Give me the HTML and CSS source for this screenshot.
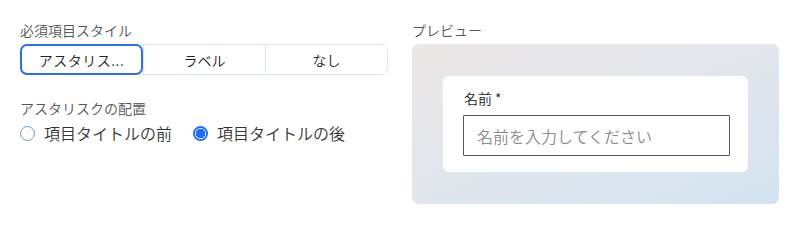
FILE: index.html
```html
<!DOCTYPE html>
<html lang="ja">
<head>
<meta charset="utf-8">
<link rel="stylesheet" href="styles.css">
</head>
<body>
<div class="page">
  <div class="col">
    <div class="label">必須項目スタイル</div>
    <div class="seg">
      <div class="seg-item active">アスタリス...</div>
      <div class="seg-item">ラベル</div>
      <div class="seg-item">なし</div>
    </div>
    <div class="label label2">アスタリスクの配置</div>
    <div class="radios">
      <label class="radio"><span class="circle"></span><span>項目タイトルの前</span></label>
      <label class="radio"><span class="circle checked"></span><span>項目タイトルの後</span></label>
    </div>
  </div>
  <div class="col">
    <div class="label">プレビュー</div>
    <div class="preview">
      <div class="card">
        <div class="field-label">名前 *</div>
        <div class="input">名前を入力してください</div>
      </div>
    </div>
  </div>
</div>
</body>
</html>
```
FILE: styles.css
```css
* { box-sizing: border-box; }
html, body { margin: 0; background: #ffffff; }
body {
  font-family: "Noto Sans CJK JP", "Noto Sans", sans-serif;
  font-weight: 350;
  color: #333;
}
.page {
  display: grid;
  grid-template-columns: 368px 367px;
  column-gap: 24px;
  padding: 20px 21px 0 20px;
}
.col { display: flex; flex-direction: column; }
.label {
  font-size: 14px;
  line-height: 20px;
  color: #555;
  margin-bottom: 4px;
}
.label2 { margin-top: 23px; margin-bottom: 2px; }
.seg {
  display: grid;
  grid-template-columns: 122px 1fr 1fr;
  height: 31px;
  border: 1px solid #dce7f5;
  border-radius: 7px;
}
.seg-item {
  display: flex;
  align-items: center;
  justify-content: center;
  font-size: 14px;
  color: #222;
  border-left: 1px solid #dce7f5;
  margin: -1px 0;
}
.seg-item:first-child { border-left: none; }
.seg-item.active {
  border: 2px solid #2f72d8;
  border-radius: 7px;
  margin: -1px 0 -1px -1px;
  letter-spacing: 0.5px;
}
.radios { display: flex; align-items: center; gap: 21px; height: 26px; }
.radio {
  display: flex;
  align-items: center;
  gap: 9px;
  font-size: 16px;
  color: #333;
}
.circle {
  width: 15px;
  height: 15px;
  border-radius: 50%;
  border: 1px solid #6b95d8;
  background: #fff;
  display: inline-block;
}
.circle.checked {
  border: 2px solid #1f6ff0;
  background: radial-gradient(circle, #1f6ff0 0 4.5px, #fff 5px);
}
.preview {
  height: 160px;
  border-radius: 7px;
  background: linear-gradient(160deg, #ece7e6 0%, #e3e6ec 45%, #d3e3f1 100%);
  padding: 32px 31px;
}
.card {
  background: #fff;
  border-radius: 6px;
  height: 96px;
  padding: 12px 18px 0 20px;
}
.field-label {
  font-size: 14px;
  line-height: 20px;
  color: #222;
  padding-left: 1px;
  margin-bottom: 7px;
}
.input {
  height: 41px;
  border: 1px solid #555;
  border-radius: 1px;
  display: flex;
  align-items: center;
  padding-left: 13px;
  font-size: 16px;
  color: #8a8a8a;
}
```
